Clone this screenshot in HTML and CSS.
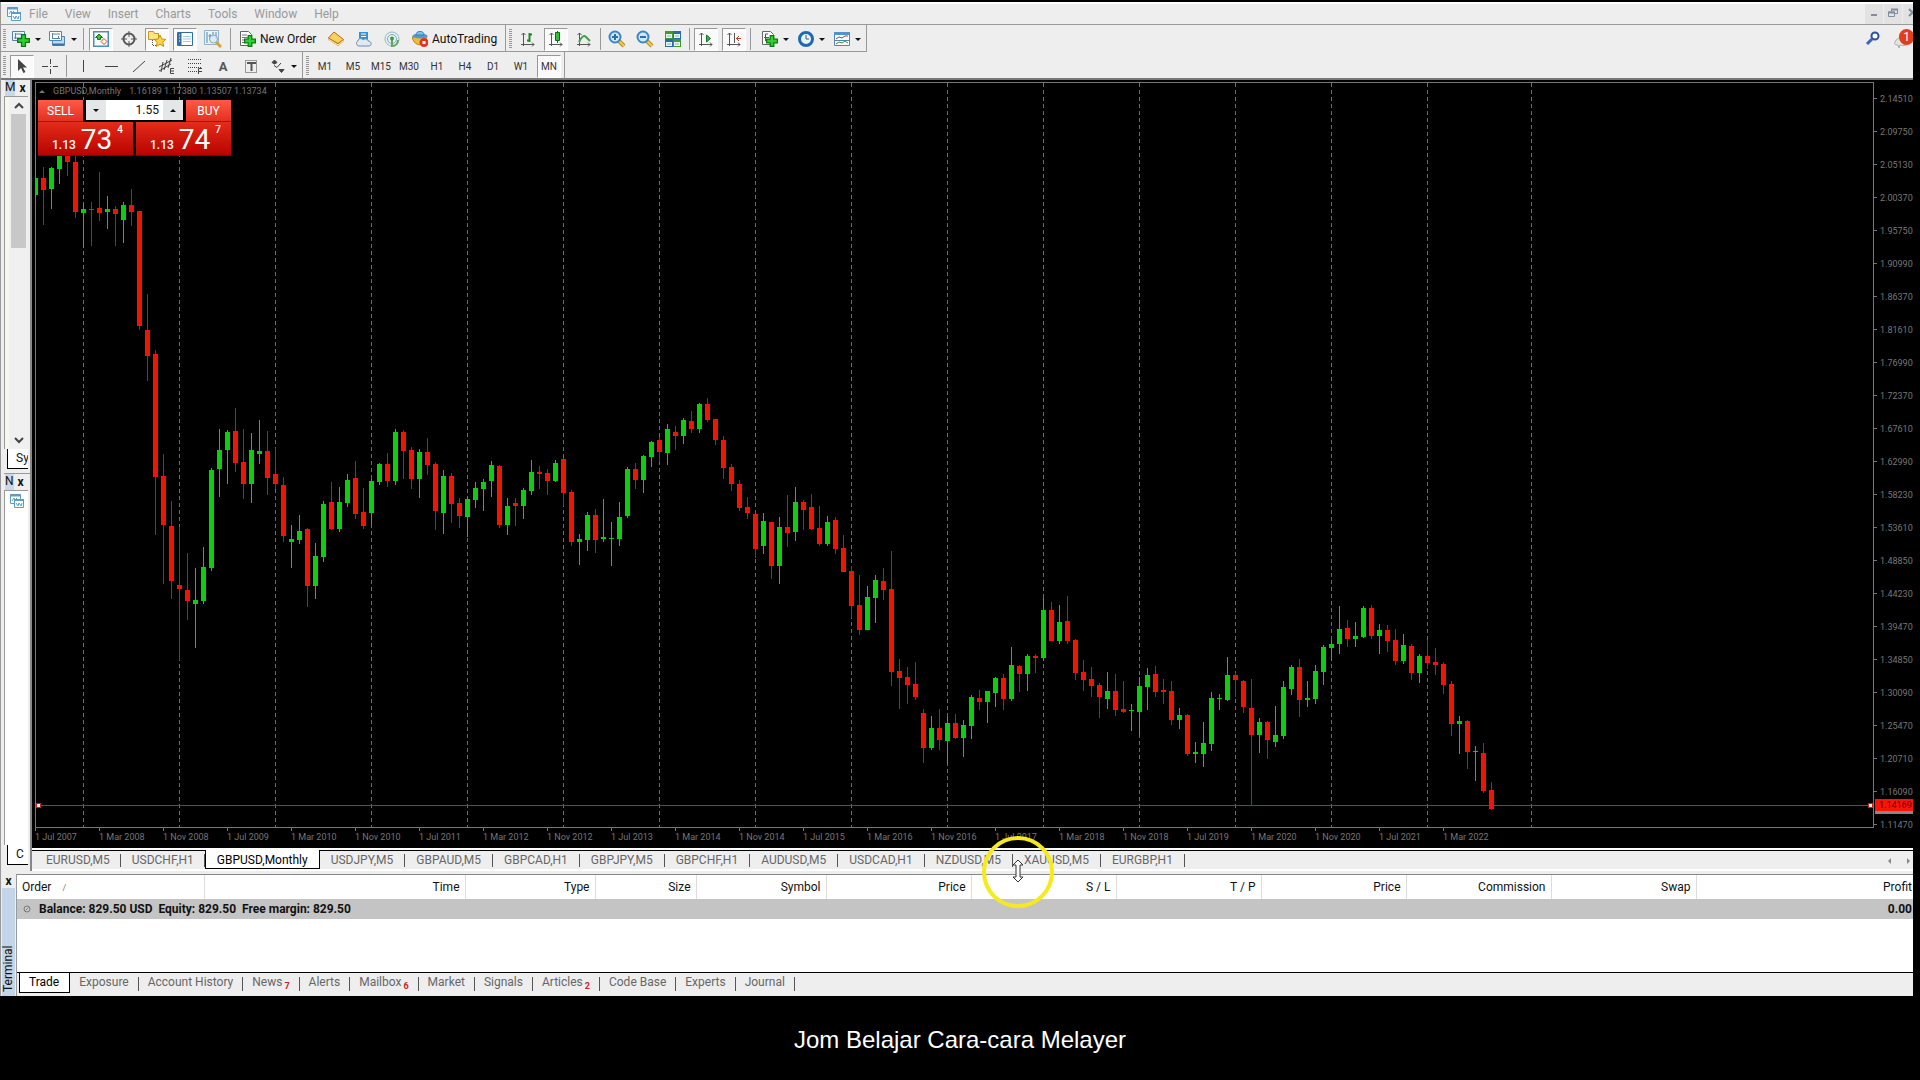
FILE: index.html
```html
<!DOCTYPE html>
<html lang="en">
<head>
    <meta charset="UTF-8">
    <meta name="viewport" content="width=device-width, initial-scale=1.0">
    <title>GBPUSD,Monthly</title>
    <link rel="stylesheet" href="styles.css">
</head>
<body>

<!-- shared icon shapes -->
<svg class="sprite" aria-hidden="true">
    <symbol id="i-app" viewBox="0 0 16 16">
        <path d="M1.5 1.5h10v9h-10z" fill="#fff" stroke="#5d9cc4"/>
        <path d="M1 2.5h11" stroke="#5d9cc4" stroke-width="2"/>
        <path d="M3 8l2-3 1 2 2-2" fill="none" stroke="#5d9cc4"/>
        <path d="M5.500 6.500h9v8h-9z" fill="#fff" stroke="#5d9cc4"/>
        <path d="M5 7h10" stroke="#5d9cc4" stroke-width="2"/>
        <path d="M7 10l2 3 1-3 2 3 1-3" fill="none" stroke="#5d9cc4"/>
    </symbol>
    <symbol id="i-plus" viewBox="0 0 10 10">
        <path d="M3.500.5h3v3h3v3h-3v3h-3v-3h-3v-3h3z" fill="#2fd02f" stroke="#087a10"/>
    </symbol>
    <symbol id="i-lens" viewBox="0 0 18 18">
        <path d="M11 11l5 5" stroke="#b98a18" stroke-width="4"/>
        <path d="M11 11l5 5" stroke="#f2cd52" stroke-width="2"/>
        <circle cx="7" cy="7" r="5.500" fill="#cfe9fb" stroke="#3d85c6" stroke-width="2"/>
    </symbol>
    <symbol id="i-axes" viewBox="0 0 16 16">
        <path d="M3.500 2v13M1 13.500h13M1.500 4l2-2 2 2M12 11.500l2 2-2 2" fill="none" stroke="#555"/>
    </symbol>
</svg>

<div class="window">
    <header class="menubar">
        <svg class="icon"><use href="#i-app"/></svg>
        <nav class="menu">
            <a href="#">File</a>
            <a href="#">View</a>
            <a href="#">Insert</a>
            <a href="#">Charts</a>
            <a href="#">Tools</a>
            <a href="#">Window</a>
            <a href="#">Help</a>
        </nav>
        <div class="window-controls">
            <button aria-label="Minimize"><svg class="icon-sm" viewBox="0 0 10 10"><path d="M2 7h6" stroke="#7f8d9c" stroke-width="2"/></svg></button>
            <button aria-label="Restore"><svg class="icon-sm" viewBox="0 0 10 10"><path d="M3.500 3V1.500h6v4H7M.5 4h6v4.500h-6z" fill="none" stroke="#7f8d9c"/><path d="M3 1.500h7M0 4.500h7" stroke="#7f8d9c" stroke-width="2"/></svg></button>
            <button aria-label="Close"><svg class="icon-sm" viewBox="0 0 10 10"><path d="M2 1l7 7M9 1L2 8" stroke="#7f8d9c" stroke-width="2"/></svg></button>
        </div>
    </header>

    <div class="toolbar">
        <div class="group">
            <i class="grip"></i>
            <button class="tool drop" aria-label="New chart">
                <svg class="icon-lg" viewBox="0 0 18 18"><path d="M.5 1.500h12v9H.5z" fill="#eef7fd" stroke="#5186b0"/><path d="M3.500 3v6M2 8h8M3 4h7" stroke="#5186b0"/><use href="#i-plus" x="5" y="4" width="13" height="13"/></svg>
            </button>
            <button class="tool drop" aria-label="Profiles">
                <svg class="icon-lg" viewBox="0 0 18 18"><path d="M4.500 6.500h12v9h-12z" fill="#bddcf2" stroke="#5186b0"/><path d="M1.500 1.500h12v9h-12z" fill="#fff" stroke="#5186b0"/><path d="M4 4h8M4.500 3v6M4 8.500h8M10.500 6v3" stroke="#5186b0"/><path d="M5 14.500h11" stroke="#3475a5" stroke-width="2"/></svg>
            </button>
            <i class="sep"></i>
            <button class="tool active" aria-label="Market Watch">
                <svg class="icon" viewBox="0 0 16 16"><path d="M.5.5h15v15H.5z" fill="#fff" stroke="#4a8fc0" stroke-width="2"/><path d="M6 3l3.500 3.500H7.500v2h-3v-2H2.500z" fill="#35c535" stroke="#137a13"/><path d="M11 13.500l-3-3L11 7.500l3 3z" fill="#fff" stroke="#d8441c"/></svg>
            </button>
            <button class="tool" aria-label="Data Window">
                <svg class="icon" viewBox="0 0 16 16"><circle cx="8" cy="8" r="5.500" fill="none" stroke="#555" stroke-width="2"/><path d="M8 0v6M8 10v6M0 8h6M10 8h6" stroke="#555"/></svg>
            </button>
            <button class="tool active" aria-label="Navigator">
                <svg class="icon-lg" viewBox="0 0 18 18"><path d="M.5 1.500h5l1 2h4v6H.5z" fill="#ffe484" stroke="#c59a1c"/><path d="M4.500 10v6M5 15.500h4" stroke="#555" stroke-dasharray="1 1"/><path d="M12 5l1.800 4 4 .4-3 2.800 1 4.300-3.800-2.300-3.700 2.300.9-4.300-3-2.800 4-.4z" fill="#ffd73d" stroke="#c58f14"/></svg>
            </button>
            <button class="tool active" aria-label="Terminal">
                <svg class="icon" viewBox="0 0 16 16"><path d="M.5 1.500h15v13H.5z" fill="#fff" stroke="#2e6ea8"/><path d="M1 2h3.500v12H1z" fill="#3a6d9c"/><path d="M6 5.500h8M6 8h8M6 10.500h8" stroke="#aac9e2"/><path d="M2 4h1M2 7h1M2 10h1" stroke="#fff"/></svg>
            </button>
            <button class="tool" aria-label="Strategy Tester">
                <svg class="icon-lg" viewBox="0 0 18 18"><path d="M.5.500h14v14H.5z" fill="#eaf4fb" stroke="#8fb3cd"/><path d="M3 2v11M6 4v5M4.500 6h3M9 2v5M12 2v7" stroke="#5186b0"/><path d="M12 12l5 5" stroke="#d9a52b" stroke-width="3"/><circle cx="9.500" cy="9" r="4" fill="#d7ebf8" fill-opacity=".8" stroke="#8aa7bd"/></svg>
            </button>
            <i class="sep"></i>
            <button class="tool text">
                <svg class="icon" viewBox="0 0 16 16"><path d="M.5.500h8l3 3v11H.5z" fill="#fff" stroke="#666"/><path d="M2 4h5M2 6.500h7M2 9h4M2 11.500h3" stroke="#777"/><use href="#i-plus" x="4" y="4" width="12" height="12"/></svg>
                New Order
            </button>
            <button class="tool" aria-label="MetaEditor">
                <svg class="icon" viewBox="0 0 16 16"><path d="M6 1l9.500 7.500v2L10 15 .5 9V7z" fill="#d18b15"/><path d="M6 1l9.500 7.500L10 12.500.5 7z" fill="#fbd063" stroke="#b57510"/><path d="M1 8.500l9 5.500 5-4" fill="none" stroke="#fff3c9"/></svg>
            </button>
            <button class="tool" aria-label="Virtual hosting">
                <svg class="icon" viewBox="0 0 16 16"><path d="M3 1h9v8H3z" fill="#2e93dc"/><path d="M5 3h5M5 5.500h5" stroke="#fff"/><path d="M2 10c0-3 4-3 5-1 2-2 5-1 5 1 4 0 4 5 1 5H3c-3 0-3-5-1-5z" fill="#e3e9f0" stroke="#6d8db0"/></svg>
            </button>
            <button class="tool" aria-label="Signals">
                <svg class="icon" viewBox="0 0 16 16"><circle cx="8" cy="8" r="7" fill="#e8f1f0" stroke="#96b7c9"/><circle cx="8" cy="8" r="4.500" fill="none" stroke="#7da8bd"/><path d="M8 8v7c4 0 6-3 6-6" fill="none" stroke="#5fa862" stroke-width="2"/><circle cx="8" cy="7.500" r="2" fill="#3b9a4a"/></svg>
            </button>
            <button class="tool text auto">
                <svg class="icon" viewBox="0 0 16 16"><path d="M0 6c2 8 8 10 13 5l2-6z" fill="#f0bb35" stroke="#b9841b"/><ellipse cx="8" cy="5" rx="7.500" ry="2.500" fill="#4b9bd8"/><path d="M4 4c0-5 8-5 8 0z" fill="#7cc0ee" stroke="#357fb8"/><circle cx="12" cy="11.500" r="4.500" fill="#e0341c"/><path d="M10.500 10h3v3h-3z" fill="#fff"/></svg>
                AutoTrading
            </button>
        </div>
        <div class="group charts">
            <i class="grip"></i>
            <button class="tool" aria-label="Bar chart"><svg class="icon" viewBox="0 0 16 16"><use href="#i-axes"/><path d="M9.500 2v9M9 3.500h3M7 9.500h3" stroke="#1c8a24" stroke-width="2"/></svg></button>
            <button class="tool active" aria-label="Candlesticks"><svg class="icon" viewBox="0 0 16 16"><use href="#i-axes"/><path d="M9.500 0v12" stroke="#0d6a14"/><path d="M7.500 1.500h4v8h-4z" fill="#2bc437" stroke="#0d6a14"/></svg></button>
            <button class="tool" aria-label="Line chart"><svg class="icon" viewBox="0 0 16 16"><use href="#i-axes"/><path d="M3 11c3-6 5-7 7-5l4 4" fill="none" stroke="#43a04a" stroke-width="2"/></svg></button>
            <i class="sep"></i>
            <button class="tool" aria-label="Zoom in"><svg class="icon-lg" viewBox="0 0 18 18"><use href="#i-lens"/><path d="M4 7h6M7 4v6" stroke="#2a6fb0" stroke-width="2"/></svg></button>
            <button class="tool" aria-label="Zoom out"><svg class="icon-lg" viewBox="0 0 18 18"><use href="#i-lens"/><path d="M4 7h6" stroke="#2a6fb0" stroke-width="2"/></svg></button>
            <button class="tool" aria-label="Tile windows"><svg class="icon" viewBox="0 0 16 16"><path d="M0 0h8v8H0zM8 8h8v8H8z" fill="#3f9a2c"/><path d="M8 0h8v8H8zM0 8h8v8H0z" fill="#2869b5"/><path d="M1 3h6v4H1zM9 3h6v4H9zM1 11h6v4H1zM9 11h6v4H9z" fill="#e7f3e6"/><path d="M2 5h4M10 5h4M2 13h4M10 13h4" stroke="#8db1cf"/></svg></button>
            <i class="sep"></i>
            <button class="tool active" aria-label="Auto scroll"><svg class="icon" viewBox="0 0 16 16"><use href="#i-axes"/><path d="M8.500 4l4 3.500-4 3.500z" fill="#2fb53a" stroke="#137a1d"/></svg></button>
            <button class="tool active" aria-label="Chart shift"><svg class="icon" viewBox="0 0 16 16"><use href="#i-axes"/><path d="M8.500 2v10" stroke="#555"/><path d="M10 7.500h5M13 5l-2.500 2.500L13 10" fill="none" stroke="#b5402a"/></svg></button>
            <i class="sep"></i>
            <button class="tool drop" aria-label="Indicators"><svg class="icon" viewBox="0 0 16 16"><path d="M.5.500h8l3 3v10H.5z" fill="#fff" stroke="#666"/><path d="M3.500 10V3H6M2 6.500h5" fill="none" stroke="#555"/><use href="#i-plus" x="4" y="4" width="12" height="12"/></svg></button>
            <button class="tool drop" aria-label="Periods"><svg class="icon" viewBox="0 0 16 16"><circle cx="8" cy="8" r="6.500" fill="#e9f5fe" stroke="#1f69b3" stroke-width="3"/><path d="M8 4v4h3" fill="none" stroke="#456"/></svg></button>
            <button class="tool drop" aria-label="Templates"><svg class="icon" viewBox="0 0 16 16"><path d="M.5 1.500h15v13H.5z" fill="#fff" stroke="#4e88b8"/><path d="M0 2.500h16" stroke="#4e94cf" stroke-width="3"/><path d="M2 8l3-2 3 1 3-2h3" fill="none" stroke="#944"/><path d="M1 9.500h14" stroke="#4e88b8" /><path d="M2 13l3-2 3 1 3-2 3 2" fill="none" stroke="#484"/></svg></button>
        </div>
        <div class="toolbar-end">
            <button class="plain" aria-label="Search"><svg class="icon" viewBox="0 0 16 16"><path d="M2 14l5-5" stroke="#3565c0" stroke-width="3"/><circle cx="10" cy="6" r="3.500" fill="#fff" stroke="#2c4fa0" stroke-width="2"/></svg></button>
            <button class="plain chat" aria-label="Messages"><svg class="icon-lg" viewBox="0 0 18 18"><path d="M1 12c2-6 12-6 13 0 0 4-5 4-8 3l-1 3-1-3C1 15 0 14 1 12z" fill="#e4e4e4" stroke="#aaa"/></svg><span class="count">1</span></button>
        </div>
    </div>

    <div class="toolbar second">
        <div class="group lines">
            <i class="grip"></i>
            <button class="tool active" aria-label="Cursor"><svg class="icon" viewBox="0 0 16 16"><path d="M4 1v12l3-3 2.500 5 2-1L9 9.500h4z" fill="#444"/></svg></button>
            <button class="tool" aria-label="Crosshair"><svg class="icon" viewBox="0 0 16 16"><path d="M8.500 1v5M8.500 11v5M0 8.500h6M11 8.500h5M8 8.500h1" stroke="#444"/></svg></button>
            <i class="sep"></i>
            <button class="tool" aria-label="Vertical line"><svg class="icon" viewBox="0 0 16 16"><path d="M8.500 2v12" stroke="#444"/></svg></button>
            <button class="tool" aria-label="Horizontal line"><svg class="icon" viewBox="0 0 16 16"><path d="M2 8.500h13" stroke="#444"/></svg></button>
            <button class="tool" aria-label="Trendline"><svg class="icon" viewBox="0 0 16 16"><path d="M2 14L14 3" stroke="#444"/></svg></button>
            <button class="tool" aria-label="Equidistant channel"><svg class="icon" viewBox="0 0 16 16"><path d="M0 9L13 2M0 13L12 6M4 4L2 14M8 2L5 12M12 0L9 10" stroke="#444"/><path d="M15 10.500h-3.500v5H15M12 13h3" fill="none" stroke="#444"/></svg></button>
            <button class="tool" aria-label="Fibonacci retracement"><svg class="icon" viewBox="0 0 16 16"><path d="M1 1.500h14M1 5.500h14M1 9.500h14M1 13.500h9" stroke="#444" stroke-dasharray="1 1"/><path d="M15 10.500h-3.500V16M12 13.500h3" fill="none" stroke="#444"/></svg></button>
            <button class="tool letter" aria-label="Text">A</button>
            <button class="tool" aria-label="Text label"><svg class="icon" viewBox="0 0 16 16"><path d="M2.500 2.500h11v12h-11z" fill="none" stroke="#444" stroke-dasharray="1 1"/><path d="M5 6V5h7v1M8.500 5v8" fill="none" stroke="#555" stroke-width="2"/></svg></button>
            <button class="tool drop" aria-label="Arrows"><svg class="icon" viewBox="0 0 16 16"><path d="M2 4.500L4.500 2 7 4.500 4.500 6zM9 11.500h5l-2.500 3z" fill="#444" stroke="#444"/><path d="M4 7.500l3 2L11 5" fill="none" stroke="#444"/></svg></button>
        </div>
        <div class="group periods">
            <i class="grip"></i>
            <button class="tool">M1</button>
            <button class="tool">M5</button>
            <button class="tool">M15</button>
            <button class="tool">M30</button>
            <button class="tool">H1</button>
            <button class="tool">H4</button>
            <button class="tool">D1</button>
            <button class="tool">W1</button>
            <button class="tool active">MN</button>
        </div>
    </div>

    <main class="workspace">
        <aside class="sidebar">
            <section class="dock watch">
                <h2 class="dock-title"><span>M</span><button aria-label="Close Market Watch">x</button></h2>
                <div class="dock-body">
                    <div class="rows"></div>
                    <div class="scroll">
                        <svg class="icon-sm" viewBox="0 0 10 10"><path d="M1 7l4-4 4 4" fill="none" stroke="#444" stroke-width="2"/></svg>
                        <div class="thumb"></div>
                        <svg class="icon-sm" viewBox="0 0 10 10"><path d="M1 3l4 4 4-4" fill="none" stroke="#444" stroke-width="2"/></svg>
                    </div>
                </div>
                <div class="dock-tab">Sy</div>
            </section>
            <section class="dock navigator">
                <h2 class="dock-title"><span>N</span><button aria-label="Close Navigator">x</button></h2>
                <div class="dock-body tree"><svg class="icon"><use href="#i-app"/></svg></div>
                <div class="dock-tab">C</div>
            </section>
        </aside>

        <div class="chart-column">
            <div class="chart">
                <div class="plot">
                    <svg class="candles" id="candles"></svg>
                    <div class="chart-title"><i class="up"></i><span>GBPUSD,Monthly</span><span>1.16189 1.17380 1.13507 1.13734</span></div>
                    <div class="one-click">
                        <button class="deal"><span class="side">SELL</span><span class="price">1.13 <b>73</b><sup>4</sup></span></button>
                        <button class="deal buy"><span class="side">BUY</span><span class="price">1.13 <b>74</b><sup>7</sup></span></button>
                        <div class="volume">
                            <button aria-label="Decrease volume"><i class="down"></i></button>
                            <input type="text" value="1.55" aria-label="Volume">
                            <button aria-label="Increase volume"><i class="up"></i></button>
                        </div>
                    </div>
                </div>
                <div class="price-axis">
                    <ul id="prices"></ul>
                    <span class="tag bid">1.13734</span>
                    <span class="tag level">1.14169</span>
                </div>
                <ul class="time-axis" id="times"></ul>
            </div>
            <nav class="chart-tabs">
                <a href="#">EURUSD,M5</a>
                <a href="#">USDCHF,H1</a>
                <a href="#" class="current">GBPUSD,Monthly</a>
                <a href="#">USDJPY,M5</a>
                <a href="#">GBPAUD,M5</a>
                <a href="#">GBPCAD,H1</a>
                <a href="#">GBPJPY,M5</a>
                <a href="#">GBPCHF,H1</a>
                <a href="#">AUDUSD,M5</a>
                <a href="#">USDCAD,H1</a>
                <a href="#">NZDUSD,M5</a>
                <a href="#">XAUUSD,M5</a>
                <a href="#">EURGBP,H1</a>
                <span class="tab-scroll">
                    <button aria-label="Scroll left"><i class="left"></i></button>
                    <button aria-label="Scroll right"><i class="right"></i></button>
                </span>
            </nav>
        </div>
    </main>

    <section class="terminal">
        <div class="terminal-rail">
            <button aria-label="Close Terminal">x</button>
            <h2>Terminal</h2>
        </div>
        <div class="terminal-main">
            <div class="orders-wrap">
                <table class="orders">
                    <colgroup>
                        <col class="c-order"><col class="c-time"><col class="c-type"><col class="c-size"><col class="c-type">
                        <col class="c-num"><col class="c-num"><col class="c-num"><col class="c-num"><col class="c-num"><col class="c-num"><col>
                    </colgroup>
                    <thead>
                        <tr><th>Order <span class="sort">/</span></th><th>Time</th><th>Type</th><th>Size</th><th>Symbol</th><th>Price</th><th>S / L</th><th>T / P</th><th>Price</th><th>Commission</th><th>Swap</th><th>Profit</th></tr>
                    </thead>
                    <tbody>
                        <tr>
                            <td colspan="11"><svg class="state" viewBox="0 0 8 8"><circle cx="4" cy="4" r="3" fill="#ccc" stroke="#777"/><path d="M2.500 5.500l3-3" stroke="#777"/></svg>Balance: 829.50 USD&nbsp; Equity: 829.50&nbsp; Free margin: 829.50</td>
                            <td>0.00</td>
                        </tr>
                    </tbody>
                </table>
            </div>
            <nav class="terminal-tabs">
                <a href="#" class="current">Trade</a>
                <a href="#">Exposure</a>
                <a href="#">Account History</a>
                <a href="#">News<sub>7</sub></a>
                <a href="#">Alerts</a>
                <a href="#">Mailbox<sub>6</sub></a>
                <a href="#">Market</a>
                <a href="#">Signals</a>
                <a href="#">Articles<sub>2</sub></a>
                <a href="#">Code Base</a>
                <a href="#">Experts</a>
                <a href="#">Journal</a>
            </nav>
        </div>
        <!-- pointer highlight over the splitter -->
        <svg class="pointer" viewBox="0 0 76 76">
            <circle cx="38" cy="38" r="34" fill="none" stroke="#f7ea1c" stroke-width="4"/>
            <path d="M38 26l5 5h-3v12h3l-5 5-5-5h3V31h-3z" fill="#fff" stroke="#333"/>
        </svg>
    </section>
</div>

<p class="caption">Jom Belajar Cara-cara Melayer</p>

<script src="chart.js"></script>
</body>
</html>
```
FILE: styles.css
```css
* {
    box-sizing: border-box;
}
body {
    margin: 0;
    height: 100vh;
    display: flex;
    flex-direction: column;
    background: #000;
    color: #111;
    font-family: Roboto, "Open Sans", sans-serif;
    font-size: 12px;
}
button, input {
    font: inherit;
    color: inherit;
    padding: 0;
    border: 0;
    background: none;
}
a {
    color: inherit;
    text-decoration: none;
}
ul, h2, p {
    margin: 0;
    padding: 0;
    list-style: none;
    font-size: inherit;
    font-weight: normal;
}
.sprite {
    position: absolute;
    width: 0;
    height: 0;
}
.icon { width: 16px; height: 16px; flex: none; }
.icon-lg { width: 18px; height: 18px; flex: none; }
.icon-sm { width: 10px; height: 10px; flex: none; }

/* small triangles */
.up, .down, .left, .right {
    display: inline-block;
    border: 3px solid transparent;
}
.up { border-top: 0; border-bottom-color: currentColor; }
.down { border-bottom: 0; border-top-color: currentColor; }
.left { border-left: 0; border-right-color: currentColor; }
.right { border-right: 0; border-left-color: currentColor; }

.window {
    flex: 1;
    display: flex;
    flex-direction: column;
    min-height: 0;
    margin: 2px 7px 0 0;
    background: #eee;
    border-left: 1px solid #999;
    overflow: hidden;
}

/* menu */
.menubar {
    display: flex;
    align-items: center;
    flex: none;
    height: 23px;
    padding-left: 5px;
    border-top: 2px solid #fff;
    border-bottom: 1px solid #999;
}
.menu {
    display: flex;
    gap: 17px;
    margin-left: 7px;
    color: #999;
}
.window-controls {
    display: flex;
    gap: 1px;
    margin-left: auto;
    margin-right: -8px;
    align-self: stretch;
}
.window-controls button {
    width: 18px;
    background: #e2e2e2;
}

/* toolbars */
.toolbar {
    display: flex;
    flex: none;
    height: 27px;
}
.second {
    height: 28px;
    border-bottom: 2px solid #777;
}
.group {
    display: flex;
    align-items: center;
    gap: 4px;
    padding: 2px 3px 0 2px;
    border-right: 1px solid #999;
    border-bottom: 1px solid #999;
}
.group + .group {
    padding-left: 3px;
}
.second .group {
    border-bottom: 0;
}
.grip {
    width: 3px;
    height: 20px;
    background: repeating-linear-gradient(#999 0 1px, #eee 1px 2px);
}
.sep {
    width: 1px;
    height: 22px;
    margin: 0 1px;
    background: #999;
}
.charts .sep, .lines .sep {
    margin: 0;
}
.charts .sep + .drop {
    margin-left: 4px;
}
.tool {
    display: flex;
    align-items: center;
    justify-content: center;
    width: 24px;
    height: 23px;
    white-space: nowrap;
}
.tool.active {
    background: #fafafa;
    border: 1px solid #999;
    border-right-color: #fff;
    border-bottom-color: #fff;
}
.drop {
    width: 32px;
    gap: 5px;
}
.drop::after {
    content: "";
    border: 3px solid transparent;
    border-top-color: #111;
    border-bottom: 0;
}
.text {
    width: 84px;
    gap: 4px;
    justify-content: flex-start;
    padding: 0 4px;
}
.auto {
    width: 94px;
}
.letter {
    font-size: 13px;
    font-weight: 700;
    color: #555;
}
.periods {
    font-size: 10px;
    color: #333;
}
.toolbar-end {
    display: flex;
    align-items: center;
    gap: 12px;
    margin-left: auto;
}
.plain {
    height: 18px;
}
.chat {
    position: relative;
    width: 20px;
}
.count {
    position: absolute;
    top: -1px;
    right: -1px;
    width: 15px;
    height: 16px;
    border-radius: 8px;
    background: #e43d1c;
    color: #fff;
    line-height: 16px;
}

/* docked panels on the left */
.workspace {
    flex: 1;
    display: flex;
    min-height: 0;
}
.sidebar {
    display: flex;
    flex-direction: column;
    width: 31px;
    border-right: 2px solid #888;
}
.dock {
    display: flex;
    flex-direction: column;
    margin-left: 3px;
    padding-right: 2px;
}
.watch {
    height: 394px;
    border-bottom: 1px solid #999;
}
.navigator {
    flex: 1;
    padding-bottom: 6px;
}
.dock-title {
    display: flex;
    gap: 4px;
    height: 16px;
    padding-left: 1px;
    line-height: 14px;
}
.dock-title span {
    background: #c8d8e8;
}
.dock-title button, .terminal-rail button {
    font-weight: 700;
    line-height: 12px;
}
.dock-body {
    flex: 1;
    display: flex;
    min-height: 0;
    border: 1px solid #999;
    border-right: 0;
    background: #fff;
}
.watch .dock-body {
    border-bottom: 0;
}
.rows {
    width: 4px;
    background: #f7f7ea;
}
.scroll {
    display: flex;
    flex-direction: column;
    align-items: center;
    flex: 1;
    padding: 4px 0;
    background: #f0f0f0;
}
.scroll .icon-sm:last-child {
    margin-top: auto;
}
.thumb {
    width: 15px;
    height: 134px;
    margin-top: 3px;
    background: #c8c8c8;
}
.tree {
    padding: 2px 0 0 4px;
    border-bottom: 0;
}
.dock-tab {
    height: 20px;
    margin-left: 3px;
    padding-left: 8px;
    overflow: hidden;
    line-height: 19px;
    background: #fff;
    border-left: 1px solid #000;
    border-bottom: 1px solid #000;
}
.watch .dock-tab {
    margin-bottom: 4px;
}

/* chart */
.chart-column {
    flex: 1;
    display: flex;
    flex-direction: column;
    min-width: 0;
}
.chart {
    flex: 1;
    display: grid;
    grid-template: minmax(0, 1fr) 20px / minmax(0, 1fr) 40px;
    min-height: 0;
    padding: 2px 0 0 3px;
    background: #000;
    color: #777;
    font-size: 9px;
}
.plot {
    position: relative;
    border: 1px solid #777;
    border-right: 0;
}
.candles {
    position: absolute;
    inset: 0;
    width: 100%;
    height: 100%;
    overflow: visible;
}
.grid-line { stroke: #6c6c6c; stroke-dasharray: 4 3; }
.level-line { stroke: #c0251a; }
.handle { fill: #fff; stroke: #e01a10; }
.bull { fill: #10cc10; }
.bear { fill: #f01405; }
.wick.bull { fill: #35b03a; }
.wick.bear { fill: #b51e14; }
.chart-title {
    position: absolute;
    top: 1px;
    left: 3px;
    display: flex;
    align-items: center;
    gap: 8px;
    line-height: 14px;
}
.price-axis {
    position: relative;
    border-left: 1px solid #777;
}
.price-axis li {
    display: flex;
    align-items: center;
    gap: 3px;
    height: 33px;
}
.price-axis li::before {
    content: "";
    width: 3px;
    height: 1px;
    background: #777;
}
.tag {
    position: absolute;
    left: 1px;
    right: 0;
    height: 12px;
    padding-left: 4px;
    line-height: 12px;
    color: #111;
}
.level { bottom: 17px; background: #fa1408; color: #600; }
.bid { bottom: 14px; background: #888; }
.time-axis {
    display: flex;
    grid-column: 1 / 3;
}
.time-axis li {
    flex: none;
    width: 64px;
    line-height: 13px;
    white-space: nowrap;
}
.time-axis li::before {
    content: "";
    display: block;
    width: 1px;
    height: 3px;
    background: #777;
}

/* one click trading */
.one-click {
    position: absolute;
    top: 17px;
    left: 2px;
    display: flex;
    gap: 3px;
    color: #fff;
    font-size: 12px;
}
.deal {
    display: flex;
    flex-direction: column;
    width: 95px;
    height: 56px;
    background: linear-gradient(#ff5a48, #e02818 45%, #b80400);
    border-bottom: 1px solid #800;
}
.side {
    width: 45px;
    height: 22px;
    line-height: 22px;
    text-align: center;
    border-bottom: 1px solid #b01008;
}
.buy .side {
    align-self: flex-end;
}
.price {
    display: flex;
    align-items: baseline;
    gap: 5px;
    height: 33px;
    padding-left: 14px;
    line-height: 35px;
    font-weight: 500;
}
.price b {
    font-size: 28px;
    font-weight: normal;
}
.price sup {
    align-self: flex-start;
    line-height: 16px;
}
.volume {
    position: absolute;
    top: 0;
    left: 45px;
    display: flex;
    width: 103px;
    height: 22px;
    border: solid #000;
    border-width: 0 3px 2px;
    color: #111;
    background: #e4e6e8;
}
.volume button {
    display: flex;
    align-items: center;
    justify-content: center;
    width: 20px;
}
.volume input {
    flex: 1;
    min-width: 0;
    padding-right: 4px;
    text-align: right;
    background: #fff;
}

/* chart tabs */
.chart-tabs {
    display: flex;
    height: 23px;
    border-top: 2px solid #fff;
    border-bottom: 2px solid #fff;
    box-shadow: inset 0 1px #000;
    color: #666;
}
.chart-tabs a {
    position: relative;
    padding: 0 11px;
    line-height: 20px;
}
.chart-tabs a:first-child {
    padding-left: 14px;
}
.chart-tabs .current ~ a {
    padding-right: 12px;
}
.chart-tabs a::after, .terminal-tabs a::after {
    content: "";
    position: absolute;
    top: 4px;
    right: 0;
    bottom: 2px;
    width: 1px;
    background: #555;
}
.chart-tabs .current, .terminal-tabs .current {
    color: #000;
    background: #fff;
    border: 1px solid #000;
    border-top: 0;
}
.chart-tabs .current::after, .terminal-tabs .current::after {
    content: none;
}
.tab-scroll {
    display: flex;
    gap: 16px;
    margin-left: auto;
    padding-right: 3px;
    align-items: center;
    color: #888;
}

/* terminal */
.terminal {
    position: relative;
    display: flex;
    flex: none;
    height: 125px;
    padding-top: 3px;
}
.terminal-rail {
    display: flex;
    flex-direction: column;
    align-items: center;
    width: 15px;
}
.terminal-rail button {
    height: 14px;
}
.terminal-rail h2 {
    flex: 1;
    width: 13px;
    padding-top: 4px;
    writing-mode: vertical-rl;
    transform: rotate(180deg);
    line-height: 13px;
    background: #c3d5e8;
}
.terminal-main {
    flex: 1;
    display: flex;
    flex-direction: column;
    min-width: 0;
    border-left: 1px solid #999;
    border-top: 1px solid #888;
}
.orders-wrap {
    flex: 1;
    background: #fff;
}
.orders {
    width: 100%;
    table-layout: fixed;
    border-collapse: collapse;
}
.c-order { width: 187px; }
.c-time { width: 261px; }
.c-type { width: 130px; }
.c-size { width: 101px; }
.c-num { width: 145px; }
.orders th {
    height: 24px;
    padding: 0 5px;
    font-weight: normal;
    text-align: right;
    border-right: 1px solid #ddd;
}
.orders th:first-child {
    text-align: left;
}
.sort {
    margin-left: 8px;
    font-size: 9px;
    color: #777;
}
.orders td {
    height: 20px;
    padding: 0 6px;
    font-weight: 700;
    background: #c4c4c4;
}
.orders th:last-child, .orders td:last-child {
    padding-right: 1px;
    text-align: right;
    border-right: 0;
}
.state {
    width: 8px;
    height: 8px;
    margin-right: 8px;
}
.terminal-tabs {
    display: flex;
    height: 24px;
    padding: 0 0 3px 2px;
    border-top: 1px solid #000;
    color: #666;
}
.terminal-tabs a {
    position: relative;
    padding: 0 10px 0 9px;
    line-height: 19px;
}
.terminal-tabs sub {
    margin-left: 2px;
    font-size: 9px;
    font-weight: 700;
    line-height: 0;
    color: #d02020;
}
.pointer {
    position: absolute;
    top: -37px;
    left: 979px;
    width: 76px;
    height: 76px;
}

.caption {
    flex: none;
    height: 84px;
    color: #fff;
    font: 24px/88px "Liberation Sans", Arial, sans-serif;
    text-align: center;
}
```
FILE: chart.js
```javascript
// one entry per month from Jul 2007: direction, high, body top, body bottom, low (y in px)
const bars = `
u154,178,195,197 d167,178,190,225 u167,168,189,209 u150,156,169,184 d150,152,162,176 d154,162,212,218
u203,209,213,248 d202,209,210,246 d172,208,213,221 u196,209,212,229 d206,209,214,246 u202,205,220,243
d189,205,212,226 d211,211,326,330 d294,330,356,381 d350,354,477,535 d454,476,525,584 d501,526,581,599
d527,585,589,660 d553,590,601,620 u568,600,604,648 u547,567,601,604 u468,470,568,571 u429,450,469,497
u430,432,450,484 d408,431,463,472 d429,462,484,499 u433,450,484,503 u420,451,454,464 d431,451,478,495
d448,474,484,489 d477,485,536,542 u525,539,542,568 u515,531,540,544 d528,529,586,607 u543,556,586,599
u501,504,557,562 d482,502,529,530 u487,502,529,532 u474,480,503,507 d461,478,514,519 d488,512,526,529
u479,481,513,525 u463,464,482,485 d453,464,481,487 u429,432,481,485 d430,432,451,479 d447,450,479,489
u449,452,479,498 d438,452,465,475 d462,464,511,530 u470,476,513,534 d473,476,504,523 d498,503,516,528
u497,499,517,537 u482,488,500,508 u479,482,489,511 u461,465,481,497 d465,466,525,528 u498,506,525,535
d498,503,506,526 u488,490,506,519 u460,472,491,495 d466,472,474,489 d469,473,481,495 u460,463,481,482
d458,459,493,506 d490,492,542,546 u534,539,542,565 u512,515,540,551 d509,515,540,553 u499,537,539,542
u522,538,539,566 u502,517,539,546 u467,469,516,518 d463,469,480,489 u455,456,480,493 u441,442,457,467
d437,440,452,462 u424,429,453,465 d426,432,436,450 u418,420,436,444 d411,421,429,433 u403,404,429,433
d398,404,420,422 d419,419,440,445 d436,440,468,479 d464,467,484,491 d480,484,508,511 d497,507,513,519
d514,514,549,558 u513,521,546,554 d522,522,566,579 u517,527,566,584 d495,527,533,547 u487,502,532,541
d500,502,510,530 d494,507,529,530 d506,528,544,546 u516,522,544,546 d517,520,549,554 d535,548,572,572
d566,571,606,618 d575,605,630,635 u586,597,630,630 u575,580,598,623 d568,581,590,600 d551,589,672,686
d659,671,678,709 d667,677,685,704 d662,684,697,700 d709,713,748,763 u716,728,748,750 d709,728,740,750
u716,723,741,764 d714,723,738,739 u720,725,738,757 u695,697,726,739 d690,698,702,710 u691,691,702,723
u677,678,693,707 d674,678,699,710 u647,665,699,701 d665,666,674,692 u654,656,674,691 d654,656,658,673
u598,610,658,661 d602,610,641,641 u605,622,641,644 d596,621,641,644 d639,640,673,680 d660,672,680,691
d667,679,686,697 d683,685,697,718 u672,691,699,709 d674,691,710,716 d681,709,712,713 u704,710,711,731
u677,686,712,735 u668,675,687,710 d666,674,692,697 d679,690,692,704 d681,691,720,725 u708,715,720,729
d714,715,754,756 u742,752,754,763 u722,743,754,767 u692,698,744,751 u694,698,699,710 u657,675,700,701
d673,675,680,697 d680,681,707,713 d679,708,735,805 u718,722,735,753 d721,722,740,759 u706,735,742,747
u681,687,736,739 u665,667,689,695 d659,667,700,717 u681,698,700,707 u665,671,699,704 u645,647,672,685
u640,644,648,661 u606,629,644,654 d620,628,639,647 u622,636,639,647 u606,608,637,638 d605,608,636,639
u624,630,636,654 d625,630,641,652 d629,640,661,665 u634,645,661,664 d644,646,673,680 u654,656,673,683
d640,656,663,669 d648,662,665,675 d662,664,685,694 d681,684,724,736 u716,721,724,754 d720,721,752,769
u746,751,752,781 d743,753,791,793 d782,790,809,810`.trim().split(/\s+/);

const STEP = 8;   // px per bar
const TOP = 83;   // y of the plot's first pixel row
const svg = document.getElementById('candles');

function add(name, attrs) {
    const el = document.createElementNS('http://www.w3.org/2000/svg', name);
    for (const key in attrs) el.setAttribute(key, attrs[key]);
    svg.appendChild(el);
}

// period separators, the last one marks the coming year
for (let x = 6 * STEP; x < 1400; x += 96) {
    add('line', { class: 'grid-line', x1: x - 0.5, x2: x - 0.5, y1: 0, y2: '100%' });
}
add('line', { class: 'grid-line', x1: 1495.5, x2: 1495.5, y1: 0, y2: '100%' });

add('line', { class: 'level-line', x1: 0, x2: '100%', y1: 722.5, y2: 722.5 });

bars.forEach((bar, i) => {
    const dir = bar[0] === 'u' ? 'bull' : 'bear';
    const [high, top, bottom, low] = bar.slice(1).split(',').map(n => n - TOP);
    const x = i * STEP - 1;
    add('rect', { class: 'wick ' + dir, x: x, y: high, width: 1, height: low - high });
    // the first bar is cut by the chart's edge
    add('rect', { class: dir, x: i ? x - 2 : x, y: top, width: i ? 5 : 3, height: Math.max(bottom - top, 1) });
});

add('rect', { class: 'handle', x: 0.5, y: 720.5, width: 4, height: 4 });
add('rect', { class: 'handle', x: '100%', y: 720.5, width: 4, height: 4, transform: 'translate(-4.5 0)' });

const prices = [2.1451, 2.0975, 2.0513, 2.0037, 1.9575, 1.9099, 1.8637, 1.8161, 1.7699, 1.7237, 1.6761, 1.6299,
    1.5823, 1.5361, 1.4885, 1.4423, 1.3947, 1.3485, 1.3009, 1.2547, 1.2071, 1.1609, 1.1147];
document.getElementById('prices').innerHTML = prices.map(p => `<li>${p.toFixed(5)}</li>`).join('');

// a date label every eighth bar
const names = { 2: 'Mar', 6: 'Jul', 10: 'Nov' };
let labels = '';
for (let m = 6; m <= 182; m += 8) {
    labels += `<li>1 ${names[m % 12]} ${2007 + Math.floor(m / 12)}</li>`;
}
document.getElementById('times').innerHTML = labels;
```
